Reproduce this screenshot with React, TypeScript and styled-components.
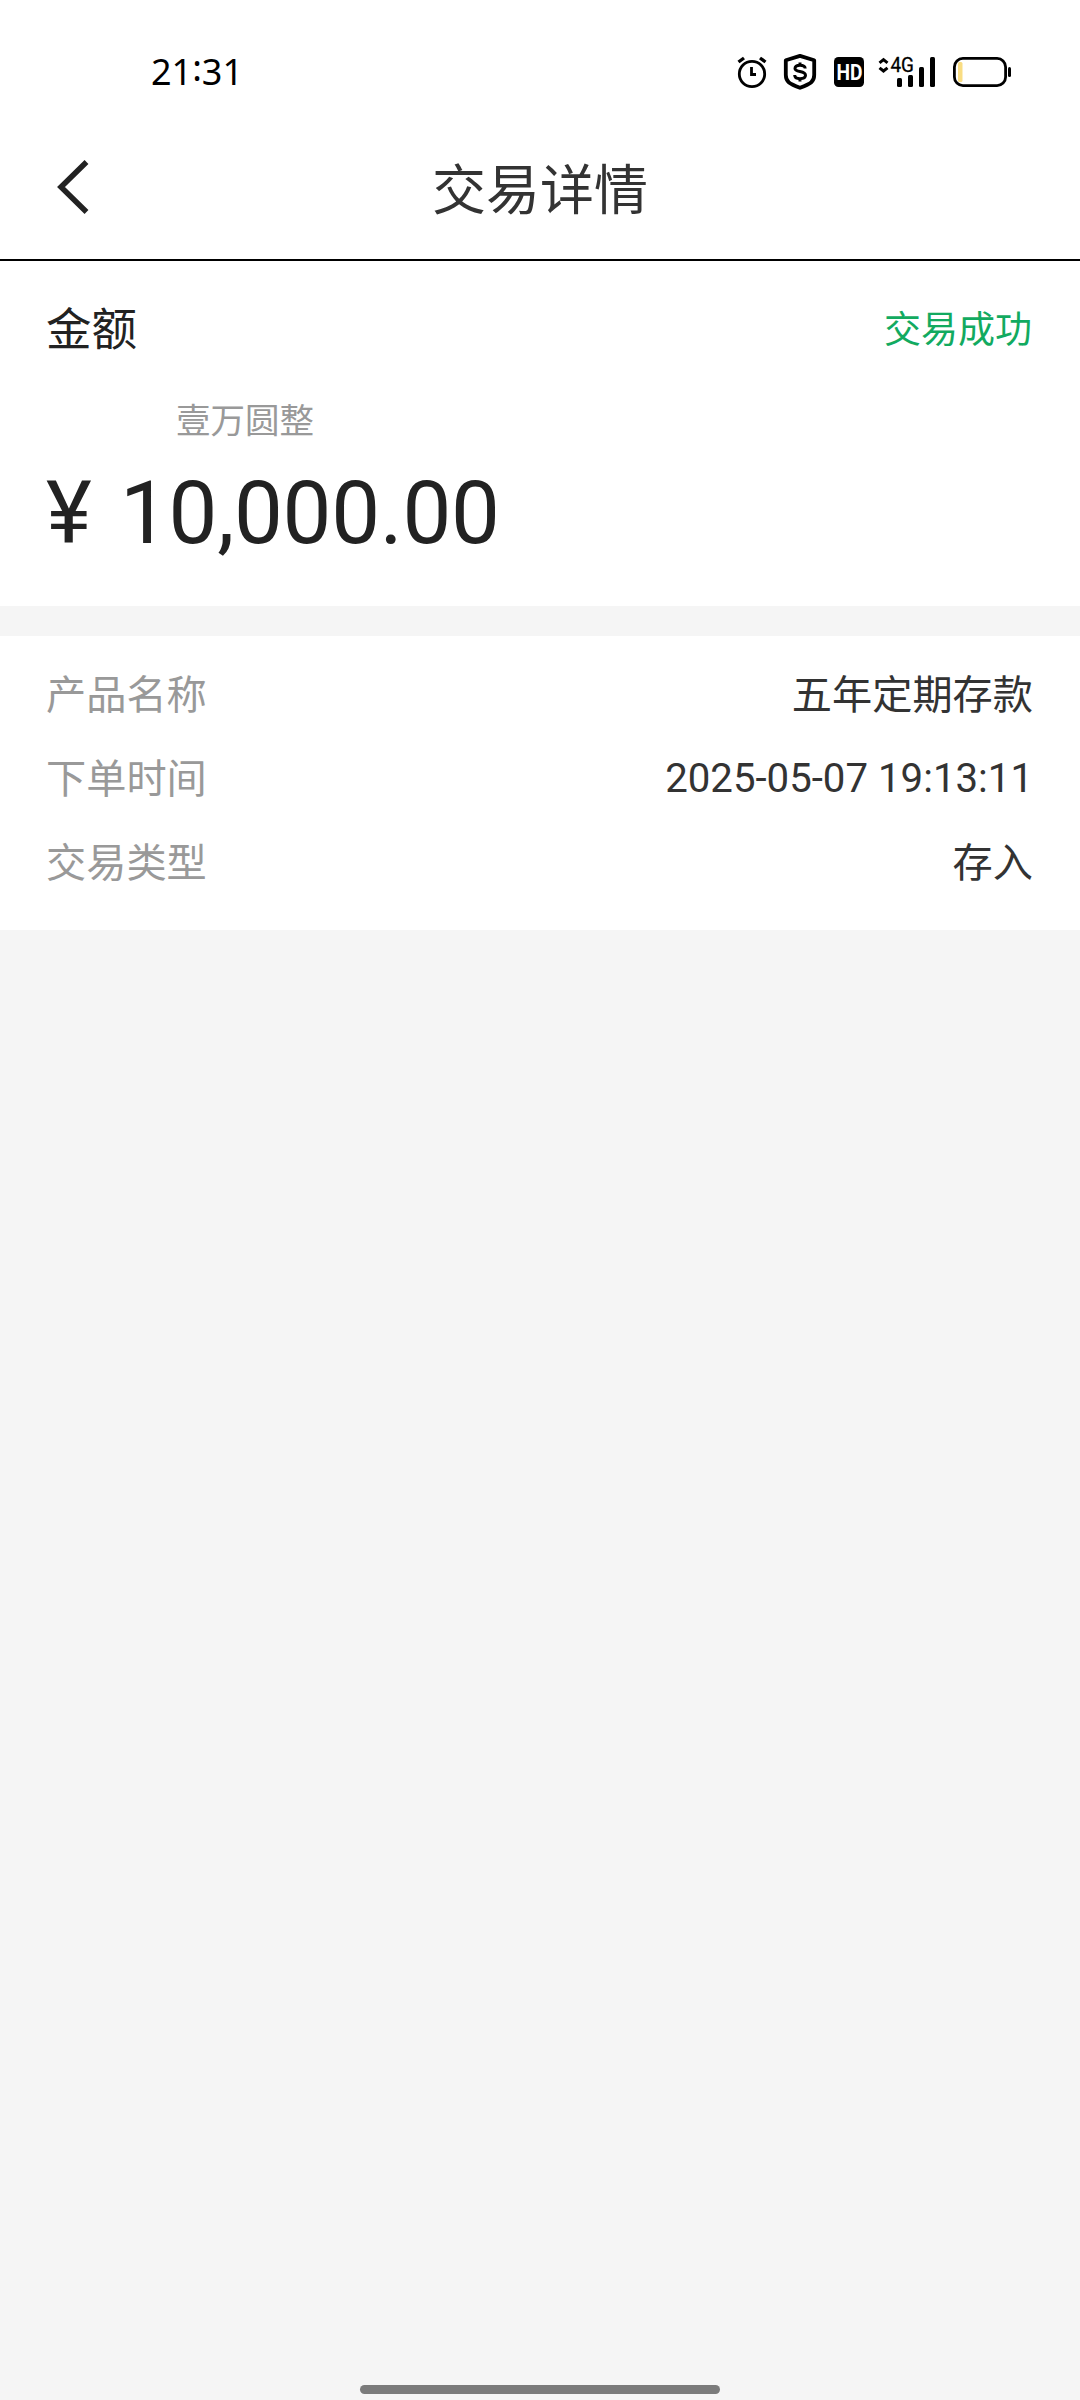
import React from "react";
import styled, { createGlobalStyle } from "styled-components";

const GlobalStyle = createGlobalStyle`
  html, body { margin: 0; background: #f5f5f5; }
  body { font-family: Roboto, "Noto Sans CJK SC", sans-serif; color: #333; }
`;

const Screen = styled.div`
  width: 1080px;
  height: 2400px;
  display: flex;
  flex-direction: column;
  background: #f5f5f5;
`;

const StatusBar = styled.header`
  height: 118px;
  box-sizing: border-box;
  padding: 26px 68px 0 151px;
  display: flex;
  align-items: flex-start;
  justify-content: space-between;
  background: #fff;
`;

const Clock = styled.time`
  font-family: "Noto Sans", sans-serif;
  font-size: 36px;
  line-height: 92px;
  height: 92px;
  color: #000;
`;

const Colon = styled.span`
  line-height: 0;
  vertical-align: 4px;
`;

const StatusIcons = styled.svg`
  width: 276px;
  height: 64px;
  margin-top: 14px;
  display: block;
`;

const NavBar = styled.nav`
  height: 143px;
  box-sizing: border-box;
  border-bottom: 2px solid #000;
  background: #fff;
  display: grid;
  grid-template-columns: 150px 1fr 150px;
  align-items: center;
`;

const BackButton = styled.button`
  border: 0;
  padding: 0 0 3px 56px;
  background: none;
  display: flex;
`;

const Title = styled.h1`
  margin: 0;
  padding-top: 6px;
  font-weight: 400;
  font-size: 54px;
  line-height: 80px;
  text-align: center;
  color: #333;
`;

const AmountCard = styled.section`
  height: 345px;
  box-sizing: border-box;
  padding: 40px 48px 0 46px;
  background: #fff;
`;

const AmountHeader = styled.div`
  height: 60px;
  display: flex;
  align-items: center;
  justify-content: space-between;
`;

const AmountLabel = styled.span`
  font-size: 45.5px;
  line-height: 60px;
  color: #222;
`;

const Status = styled.span`
  font-size: 37px;
  line-height: 60px;
  color: #12aa60;
`;

const AmountWords = styled.div`
  margin: 35px 0 0 130px;
  font-size: 34.5px;
  line-height: 50px;
  color: #999;
`;

const Amount = styled.div`
  display: flex;
  font-size: 87px;
  line-height: 104px;
  letter-spacing: -0.3px;
  margin-top: 15px;
  color: #222;
`;

const Currency = styled.span`
  width: 74px;
`;

const Details = styled.dl`
  margin: 30px 0 0;
  height: 294px;
  box-sizing: border-box;
  padding: 17px 47px 0 46px;
  background: #fff;
`;

const DetailRow = styled.div`
  height: 84px;
  display: flex;
  align-items: center;
  justify-content: space-between;
  font-size: 40.2px;
  line-height: 60px;
`;

const DetailName = styled.dt`
  padding-top: 2px;
  color: #999;
`;

const DetailValue = styled.dd<{ $numeric: boolean }>`
  margin: 0;
  padding-top: ${(p) => (p.$numeric ? 0 : 2)}px;
  color: #333;
`;

const HomeBar = styled.div`
  width: 360px;
  height: 9px;
  margin: auto auto 6px;
  border-radius: 5px;
  background: #7b7b7b;
`;

const rows = [
  { name: "产品名称", value: "五年定期存款", numeric: false },
  { name: "下单时间", value: "2025-05-07 19:13:11", numeric: true },
  { name: "交易类型", value: "存入", numeric: false },
];

function StatusGlyphs() {
  return (
    <StatusIcons viewBox="736 40 276 64" fill="none" stroke="#000">
      <circle cx="752" cy="74" r="12.7" strokeWidth="2.8" />
      <path d="M738.5 62 744 58M765.5 62 760 58" strokeWidth="3.4" />
      <path d="M751.5 67V74.5H756" strokeWidth="2.8" />
      <path
        d="M800 55.9 L814.2 60.2 V75 C814.2 82 810.5 83.5 800 87.8 C789.5 83.5 785.8 82 785.8 75 V60.2 Z"
        strokeWidth="3.8"
        strokeLinejoin="round"
      />
      <path
        d="M805.2 68.5C805 66 803 65.3 800 65.3C797 65.3 795 66.3 795 68.5C795 73 805.5 70 805.5 75.3C805.5 77.5 803.5 78.7 800 78.7C796.5 78.7 794.7 77.5 794.7 75M800 62.5V65.5M800 78.5V81.5"
        strokeWidth="3"
      />
      <rect x="834" y="57" width="30" height="30" rx="4.5" fill="#000" stroke="none" />
      <text
        x="849.5"
        y="80"
        textAnchor="middle"
        fontFamily="Roboto"
        fontWeight="700"
        fontSize="22.5"
        textLength="26"
        lengthAdjust="spacingAndGlyphs"
        fill="#fff"
        stroke="none"
      >
        HD
      </text>
      <path d="M879.5 62.8 883.5 59.6 887.5 62.8M879.5 67.8 883.5 71 887.5 67.8" strokeWidth="3" />
      <text
        x="890.5"
        y="72"
        fontFamily="Roboto"
        fontWeight="400"
        fontSize="19.5"
        textLength="23.5"
        lengthAdjust="spacingAndGlyphs"
        fill="#000"
        strokeWidth="0.3"
      >
        4G
      </text>
      <g fill="#000" stroke="none">
        <rect x="897" y="78" width="5" height="9" rx="1.5" />
        <rect x="908" y="75" width="5" height="12" rx="1.5" />
        <rect x="919" y="67" width="5" height="20" rx="1.5" />
        <rect x="930" y="57" width="5" height="30" rx="1.5" />
      </g>
      <rect x="954.4" y="58.4" width="51.2" height="27.2" rx="8.5" strokeWidth="2.8" />
      <rect x="958" y="62" width="4.5" height="20" rx="1.5" fill="#f9dd83" stroke="none" />
      <rect x="1008" y="67" width="3" height="10" rx="1.5" fill="#000" stroke="none" />
    </StatusIcons>
  );
}

export default function App() {
  return (
    <>
      <GlobalStyle />
      <Screen>
        <StatusBar>
          <Clock>
            21<Colon>:</Colon>31
          </Clock>
          <StatusGlyphs />
        </StatusBar>
        <NavBar>
          <BackButton aria-label="返回">
            <svg width="34" height="56" viewBox="0 0 34 56" fill="none" stroke="#222" strokeWidth="5.5">
              <path d="M30.5 3 5 28 30.5 53" />
            </svg>
          </BackButton>
          <Title>交易详情</Title>
        </NavBar>
        <AmountCard>
          <AmountHeader>
            <AmountLabel>金额</AmountLabel>
            <Status>交易成功</Status>
          </AmountHeader>
          <AmountWords>壹万圆整</AmountWords>
          <Amount>
            <Currency>¥</Currency>
            <span>10,000.00</span>
          </Amount>
        </AmountCard>
        <Details>
          {rows.map(({ name, value, numeric }) => (
            <DetailRow key={name}>
              <DetailName>{name}</DetailName>
              <DetailValue $numeric={numeric}>{value}</DetailValue>
            </DetailRow>
          ))}
        </Details>
        <HomeBar />
      </Screen>
    </>
  );
}
